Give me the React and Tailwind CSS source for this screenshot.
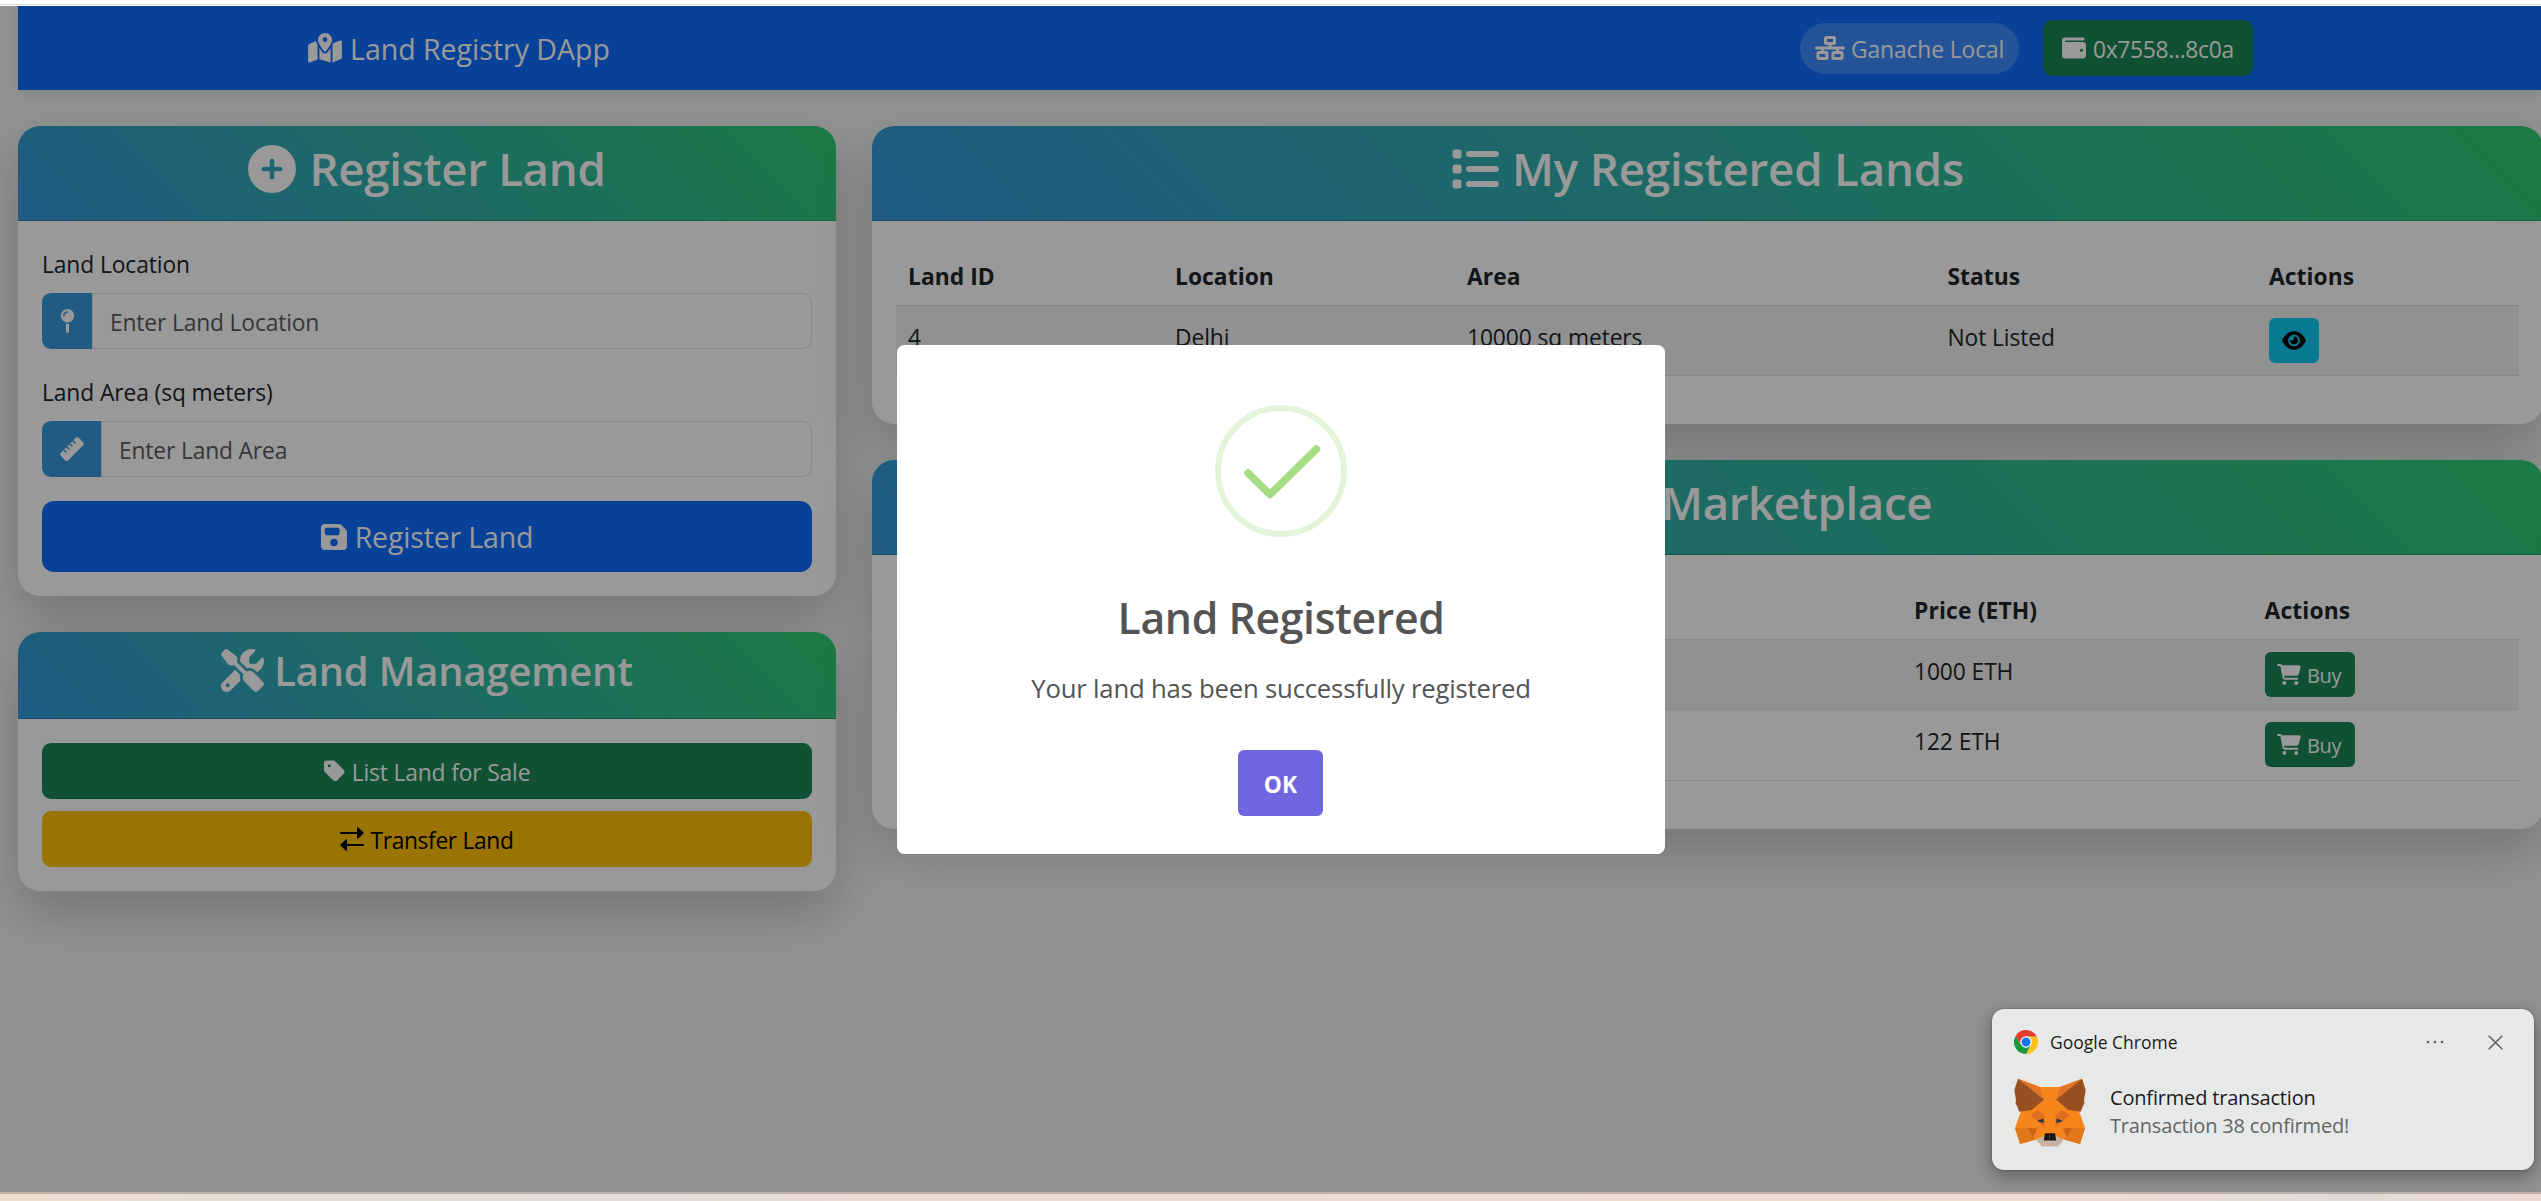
import React from "react";
import {
  FaMapLocationDot, FaCirclePlus, FaMapPin, FaRuler, FaFloppyDisk, FaTag,
  FaScrewdriverWrench, FaNetworkWired, FaWallet, FaList, FaEye, FaCartShopping,
} from "react-icons/fa6";

const gradient = "bg-[linear-gradient(45deg,#3498db,#2ecc71)]";
const cardShadow = "shadow-[0_22px_52px_rgba(0,0,0,0.2)]";

function TransferIcon() {
  return (
    <svg className="size-[24px]" viewBox="0 0 24 24" fill="currentColor">
      <path d="M1 5 H17 V1 Q17 0 18 .3 L23.600 5.400 Q24 6 23.600 6.600 L18 11.700 Q17 12 17 11 V7 H1 Q0 7 0 6 Q0 5 1 5 Z" />
      <path d="M23 17 H7 V13 Q7 12 6 12.300 L.4 17.400 Q0 18 .4 18.600 L6 23.700 Q7 24 7 23 V19 H23 Q24 19 24 18 Q24 17 23 17 Z" />
    </svg>
  );
}

function CardHeader({ children, className }) {
  return (
    <div className={`flex items-center rounded-t-[22px] border-b border-black/20 font-semibold text-white ${gradient} ${className}`}>
      {children}
    </div>
  );
}

function Field({ label, placeholder, icon, addon }) {
  return (
    <div>
      <label className="block h-[36px] pt-[2px] text-[22.8px] leading-[36px] tracking-[-0.1px] whitespace-nowrap">{label}</label>
      <div className="mt-[12px] flex h-[56px]">
        <div className={`flex items-center justify-center rounded-l-[9px] bg-[#3498db] text-white ${addon}`}>{icon}</div>
        <div className="flex flex-1 items-center rounded-r-[9px] border border-[#dee2e6] pt-[4px] pl-[17px] text-[22.8px] tracking-[-0.15px] whitespace-nowrap text-[#595c5f]">
          {placeholder}
        </div>
      </div>
    </div>
  );
}

function Buy() {
  return (
    <div className="flex h-[45px] w-[90px] items-center rounded-[6px] bg-[#198754] pl-[12.5px] text-white">
      <FaCartShopping className="h-[21px] w-[24px]" />
      <span className="ml-[6px] pt-[2px] text-[20px] tracking-[-0.4px]">Buy</span>
    </div>
  );
}

function Navbar() {
  return (
    <nav className="ml-[18px] flex h-[84px] items-center bg-[#0d6efd] pl-[290px] text-white shadow-[0_3px_15px_rgba(0,0,0,0.1)]">
      <FaMapLocationDot className="h-[30px] w-[34px]" />
      <span className="ml-[8px] w-[260px] pt-[2px] text-[28.5px] whitespace-nowrap">Land Registry DApp</span>
      <div className="ml-[1190px] flex h-[51px] w-[219px] items-center rounded-full bg-white/20 pl-[15px]">
        <FaNetworkWired className="h-[24px] w-[30px]" />
        <span className="ml-[6px] pt-[4px] text-[22.8px] tracking-[-0.1px] whitespace-nowrap">Ganache Local</span>
      </div>
      <div className="ml-[24px] flex h-[56px] w-[210px] items-center rounded-[9px] bg-[#198754] pl-[19px]">
        <FaWallet className="h-[24px] w-[24px]" />
        <span className="ml-[7px] pt-[4px] text-[22.8px] tracking-[-0.3px] whitespace-nowrap">0x7558...8c0a</span>
      </div>
    </nav>
  );
}

function LeftColumn() {
  return (
    <div className="flex w-[818px] shrink-0 flex-col gap-[36px]">
      <section className={`h-[470px] rounded-[22px] bg-white ${cardShadow}`}>
        <CardHeader className="h-[95px] justify-center pb-[9px]">
          <FaCirclePlus className="size-[48px]" />
          <span className="ml-[13px] text-[45.6px] tracking-[-0.3px] whitespace-nowrap">Register Land</span>
        </CardHeader>
        <div className="flex flex-col gap-[24px] px-[24px] pt-[24px]">
          <Field label="Land Location" placeholder="Enter Land Location" addon="w-[50px]" icon={<FaMapPin className="h-[24px] w-[15px]" />} />
          <Field label="Land Area (sq meters)" placeholder="Enter Land Area" addon="w-[59px]" icon={<FaRuler className="size-[24px]" />} />
          <div className="flex h-[71px] items-center justify-center rounded-[12px] bg-[#0d6efd] text-white">
            <FaFloppyDisk className="h-[30px] w-[26px]" />
            <span className="ml-[8px] pt-[2px] text-[28.5px] tracking-[-0.15px]">Register Land</span>
          </div>
        </div>
      </section>
      <section className={`h-[259px] rounded-[22px] bg-white ${cardShadow}`}>
        <CardHeader className="h-[87px] justify-center pb-[9px]">
          <FaScrewdriverWrench className="size-[43px]" />
          <span className="ml-[10px] text-[39.9px] tracking-[-0.15px] whitespace-nowrap">Land Management</span>
        </CardHeader>
        <div className="flex flex-col gap-[12px] p-[24px]">
          <div className="flex h-[56px] items-center justify-center rounded-[9px] bg-[#198754] text-white">
            <FaTag className="h-[24px] w-[21px]" />
            <span className="ml-[7px] pt-[4px] text-[22.8px] tracking-[-0.15px]">List Land for Sale</span>
          </div>
          <div className="flex h-[56px] items-center justify-center rounded-[9px] bg-[#ffc107] text-black">
            <TransferIcon />
            <span className="ml-[6px] pt-[4px] text-[22.8px] tracking-[-0.35px]">Transfer Land</span>
          </div>
        </div>
      </section>
    </div>
  );
}

function LandsTable() {
  const cols = "grid grid-cols-[267px_292px_480.5px_321.5px_1fr] pl-[12px]";
  return (
    <div className="mx-[24px] pt-[24px] text-[22.8px] tracking-[-0.1px]">
      <div className={`${cols} h-[61px] items-center border-b border-[#dee2e6] pt-[5px] font-bold tracking-[0.05px]`}>
        <span>Land ID</span><span>Location</span><span>Area</span><span>Status</span><span>Actions</span>
      </div>
      <div className={`${cols} h-[70px] border-b border-[#dee2e6] bg-black/5 pt-[12px] leading-[40px]`}>
        <span>4</span><span>Delhi</span><span>10000 sq meters</span><span>Not Listed</span>
        <div className="flex h-[45px] w-[50px] items-center justify-center rounded-[6px] bg-[#0dcaf0] text-black">
          <FaEye className="h-[21px] w-[24px]" />
        </div>
      </div>
    </div>
  );
}

function MarketTable() {
  const cols = "grid grid-cols-[350.5px_1fr] pl-[1018px]";
  return (
    <div className="mx-[24px] pt-[24px] text-[22.8px] tracking-[-0.1px]">
      <div className={`${cols} h-[61px] items-center border-b border-[#dee2e6] pt-[5px] font-bold tracking-[0.15px]`}>
        <span>Price (ETH)</span><span>Actions</span>
      </div>
      <div className={`${cols} h-[70px] border-b border-[#dee2e6] bg-black/5 pt-[12px] leading-[40px]`}>
        <span>1000 ETH</span><Buy />
      </div>
      <div className={`${cols} h-[71px] border-b border-[#dee2e6] pt-[12px] leading-[40px]`}>
        <span>122 ETH</span><Buy />
      </div>
    </div>
  );
}

function RightColumn() {
  return (
    <div className="flex w-[1671px] shrink-0 flex-col gap-[36px]">
      <section className={`h-[298px] rounded-[22px] bg-white ${cardShadow}`}>
        <CardHeader className="h-[95px] justify-center pb-[9px]">
          <FaList className="size-[48px]" />
          <span className="ml-[13px] text-[45.6px] tracking-[-0.15px] whitespace-nowrap">My Registered Lands</span>
        </CardHeader>
        <LandsTable />
      </section>
      <section className={`h-[369px] rounded-[22px] bg-white ${cardShadow}`}>
        <CardHeader className="h-[95px] pb-[9px] pl-[789px]">
          <span className="text-[45.6px] tracking-[-0.35px] whitespace-nowrap">Marketplace</span>
        </CardHeader>
        <MarketTable />
      </section>
    </div>
  );
}

function SuccessModal() {
  return (
    <div className="absolute top-[339px] left-[897px] flex h-[509px] w-[768px] flex-col items-center rounded-[7.5px] bg-white pt-[60px] text-[#545454]">
      <svg className="size-[132px]" viewBox="0 0 132 132" fill="none">
        <circle cx="66" cy="66" r="63" stroke="#e4f4db" strokeWidth="6" />
        <path d="M33 68 L55 89.500 L101.500 44" stroke="#a5dc86" strokeWidth="7.5" strokeLinecap="round" strokeLinejoin="round" />
      </svg>
      <div className="mt-[51px] h-[60px] text-[42.8px] leading-[60px] font-semibold tracking-[-0.4px] whitespace-nowrap">Land Registered</div>
      <div className="mt-[21px] h-[40px] text-[25.7px] leading-[40px] tracking-[-0.2px] whitespace-nowrap">Your land has been successfully registered</div>
      <div className="mt-[41px] mr-[1px] flex h-[66px] w-[85px] items-center justify-center rounded-[6px] bg-[#7066e0] pt-[4px] text-[22.8px] font-bold text-white">OK</div>
    </div>
  );
}

function ChromeLogo() {
  return (
    <svg className="size-[24px]" viewBox="0 0 48 48">
      <path d="M24 13 H45.300 A24 24 0 0 1 24 48 L33.500 29.500 Z" fill="#fcc31b" />
      <path d="M3.200 12 L14.500 29.500 L24 35 L33.500 29.500 L24 48 A24 24 0 0 1 3.200 12 Z" fill="#1e9640" />
      <path d="M3.200 12 A24 24 0 0 1 45.300 13 H24 L14.500 29.500 Z" fill="#e33b2e" />
      <circle cx="24" cy="24" r="11.500" fill="#fff" />
      <circle cx="24" cy="24" r="9" fill="#1a73e8" />
    </svg>
  );
}

function FoxHalf() {
  return (
    <g>
      <path d="M36.200 9 H26 L4 .7 L7 33 L1 50 L6 66 L22 61.500 L36.200 60 Z" fill="#f6851b" />
      <path d="M4 .7 L26 9 L30 21.500 Z" fill="#e27625" />
      <path d="M4 .7 L.3 12 L2 22 L1.500 25 L3 28 L5.300 33.700 L17.700 32 L30 21.500 Z" fill="#975022" />
      <path d="M1 50 H15 L22 61.500 L6 66 Z" fill="#e2761b" />
      <path d="M16.500 37 L24 32 L30.500 37 V49 Z" fill="#dd6f22" />
      <path d="M14.300 50 L23 50.500 L19.300 59.500 Z" fill="#cd6116" />
      <path d="M23 43 L29.300 40.500 L29.800 45 Z" fill="#233447" />
      <path d="M22 61.500 L30 58 H36.200 V68.500 H28 Z" fill="#c9b2a4" />
      <path d="M29.800 62.500 L31 55.300 H36.200 V62.500 Z" fill="#161616" />
    </g>
  );
}

function Fox() {
  return (
    <svg className="h-[70px] w-[72px] shrink-0" viewBox="0 0 72 70">
      <FoxHalf />
      <g transform="translate(72 0) scale(-1 1)"><FoxHalf /></g>
    </svg>
  );
}

function Toast() {
  return (
    <div className="absolute top-[1003px] left-[1992px] h-[161px] w-[542px] rounded-[12px] bg-[#e7e9e8] pr-[31px] pl-[22px] shadow-[0_6px_18px_rgba(0,0,0,0.35),0_0_2px_rgba(0,0,0,0.4)]">
      <div className="flex h-[46px] items-center pt-[20px]">
        <ChromeLogo />
        <span className="ml-[12px] text-[17.5px] leading-[24px] whitespace-nowrap text-[#1b1b1b]">Google Chrome</span>
        <svg className="ml-auto h-[4px] w-[18px]" viewBox="0 0 18 4" fill="#5d5f5e">
          <circle cx="2" cy="2" r="1.300" /><circle cx="9" cy="2" r="1.300" /><circle cx="16" cy="2" r="1.300" />
        </svg>
        <svg className="ml-[44px] size-[15px]" viewBox="0 0 15 15" stroke="#5d5f5e" strokeWidth="1.500">
          <path d="M.7.7 14.300 14.300M14.300.7.7 14.300" />
        </svg>
      </div>
      <div className="mt-[23px] flex">
        <Fox />
        <div className="ml-[24px] pt-[6px] text-[20px] leading-[28px] tracking-[-0.18px] whitespace-nowrap">
          <div className="text-[#1b1b1b]">Confirmed transaction</div>
          <div className="text-[#636564]">Transaction 38 confirmed!</div>
        </div>
      </div>
    </div>
  );
}

export default function App() {
  return (
    <div className="h-[1201px] w-[2541px] overflow-hidden bg-white font-['Open_Sans',sans-serif] text-[#212529]">
      <div className="h-[6px] border-b border-white bg-white"><div className="h-[5px] border-b border-[#dddddd]" /></div>
      <div className="relative h-[1186px] overflow-hidden bg-[#f1f4f3]">
        <Navbar />
        <main className="mt-[36px] ml-[18px] flex gap-[36px]">
          <LeftColumn />
          <RightColumn />
        </main>
        <div className="absolute inset-0 bg-black/40" />
        <SuccessModal />
        <Toast />
      </div>
      <div className="h-[9px] border-t-2 border-[#bcb0a9] bg-[linear-gradient(90deg,#ecdfcf,#e2dcd6_15%,#e2dbda_25%,#e8dbd2_34%,#f0dcd0_80%,#e0dad9_92%,#eddad2)]" />
    </div>
  );
}
